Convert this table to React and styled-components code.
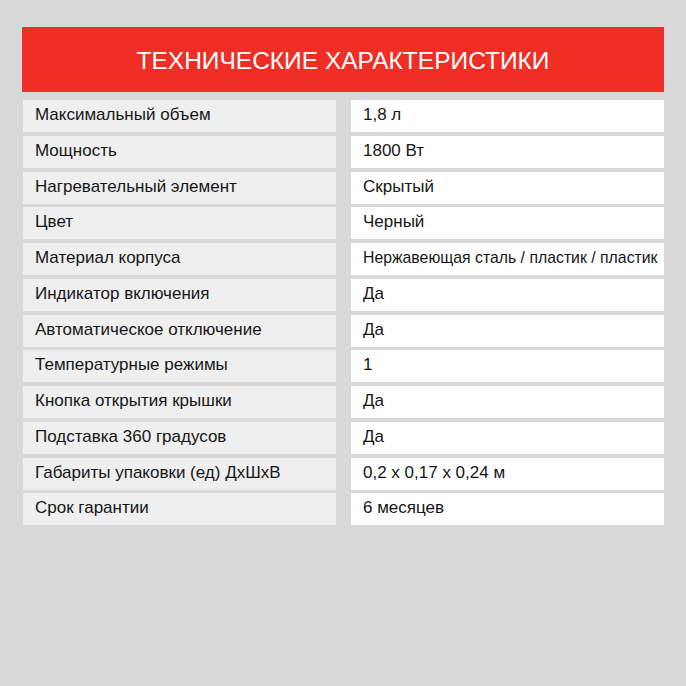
import React from 'react'
import styled, { createGlobalStyle } from 'styled-components'

const GlobalStyle = createGlobalStyle`
  html, body {
    margin: 0;
    padding: 0;
    background: #d9d9d9;
  }
  body {
    font-family: "Liberation Sans", Arial, sans-serif;
  }
`

const Page = styled.div`
  width: 686px;
  height: 686px;
  box-sizing: border-box;
  padding: 27px 22px 0 22px;
  background: #d9d9d9;
`

const Banner = styled.div`
  height: 65px;
  background: #ef2f25;
  color: #fff;
  display: flex;
  align-items: center;
  justify-content: center;
  font-size: 24.5px;
  padding-top: 2px;
  box-sizing: border-box;
`

const Table = styled.div`
  margin-top: 8px;
  display: grid;
  grid-template-columns: 313px 313px;
  column-gap: 15px;
  row-gap: 3.75px;
  padding-left: 1px;
`

const Cell = styled.div`
  height: 32px;
  display: flex;
  align-items: center;
  padding: 0 0 2px 12px;
  box-sizing: border-box;
  background: ${p => (p.$value ? '#ffffff' : '#efefef')};
  color: #161616;
  font-size: 17px;
  white-space: nowrap;
  overflow: hidden;
`

const Squeezed = styled.span`
  display: inline-block;
  transform-origin: left center;
  transform: scaleX(${p => p.$scale || 1});
`

const rows = [
  ['Максимальный объем', '1,8 л'],
  ['Мощность', '1800 Вт'],
  ['Нагревательный элемент', 'Скрытый'],
  ['Цвет', 'Черный'],
  ['Материал корпуса', 'Нержавеющая сталь / пластик / пластик', 0.93],
  ['Индикатор включения', 'Да'],
  ['Автоматическое отключение', 'Да'],
  ['Температурные режимы', '1'],
  ['Кнопка открытия крышки', 'Да'],
  ['Подставка 360 градусов', 'Да'],
  ['Габариты упаковки (ед) ДхШхВ', '0,2 х 0,17 х 0,24 м'],
  ['Срок гарантии', '6 месяцев'],
]

export default function App() {
  return (
    <Page>
      <GlobalStyle />
      <Banner>ТЕХНИЧЕСКИЕ ХАРАКТЕРИСТИКИ</Banner>
      <Table>
        {rows.map(([name, value, scale]) => (
          <React.Fragment key={name}>
            <Cell>{name}</Cell>
            <Cell $value>
              <Squeezed $scale={scale}>{value}</Squeezed>
            </Cell>
          </React.Fragment>
        ))}
      </Table>
    </Page>
  )
}
